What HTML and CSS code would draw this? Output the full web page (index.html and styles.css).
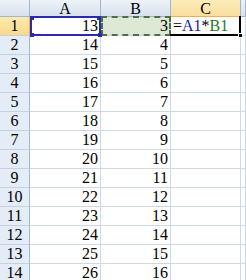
FILE: index.html
```html
<!DOCTYPE html>
<html lang="zh-CN">
<head>
    <meta charset="UTF-8">
    <title>sheet</title>
    <link rel="stylesheet" href="styles.css">
</head>
<body>
<div class="sheet">
    <div class="corner"></div>
    <div class="hd">A</div>
    <div class="hd">B</div>
    <div class="hd hd-on">C</div>
    <div class="hd"></div>

    <div class="rh rh-on">1</div>
    <div class="cell ref-a">13<i class="dot tl"></i><i class="dot tr"></i><i class="dot bl"></i><i class="dot br"></i></div>
    <div class="cell ref-b">3</div>
    <div class="cell edit"><span>=</span><span class="c-a">A1</span><span>*</span><span class="c-b">B1</span><i class="fill"></i></div>
    <div class="cell"></div>

    <div class="rh">2</div><div class="cell">14</div><div class="cell">4</div><div class="cell"></div><div class="cell"></div>
    <div class="rh">3</div><div class="cell">15</div><div class="cell">5</div><div class="cell"></div><div class="cell"></div>
    <div class="rh">4</div><div class="cell">16</div><div class="cell">6</div><div class="cell"></div><div class="cell"></div>
    <div class="rh">5</div><div class="cell">17</div><div class="cell">7</div><div class="cell"></div><div class="cell"></div>
    <div class="rh">6</div><div class="cell">18</div><div class="cell">8</div><div class="cell"></div><div class="cell"></div>
    <div class="rh">7</div><div class="cell">19</div><div class="cell">9</div><div class="cell"></div><div class="cell"></div>
    <div class="rh">8</div><div class="cell">20</div><div class="cell">10</div><div class="cell"></div><div class="cell"></div>
    <div class="rh">9</div><div class="cell">21</div><div class="cell">11</div><div class="cell"></div><div class="cell"></div>
    <div class="rh">10</div><div class="cell">22</div><div class="cell">12</div><div class="cell"></div><div class="cell"></div>
    <div class="rh">11</div><div class="cell">23</div><div class="cell">13</div><div class="cell"></div><div class="cell"></div>
    <div class="rh">12</div><div class="cell">24</div><div class="cell">14</div><div class="cell"></div><div class="cell"></div>
    <div class="rh">13</div><div class="cell">25</div><div class="cell">15</div><div class="cell"></div><div class="cell"></div>
    <div class="rh">14</div><div class="cell">26</div><div class="cell">16</div><div class="cell"></div><div class="cell"></div>
</div>
</body>
</html>
```

FILE: styles.css
```css
* {
    margin: 0;
    padding: 0;
    box-sizing: border-box;
}

body {
    background: #ffffff;
    font-family: "Liberation Serif", "Noto Sans CJK SC", serif;
    font-size: 16px;
    color: #000000;
    overflow: hidden;
}

.sheet {
    display: grid;
    grid-template-columns: 30px 71px 70px 70px 1fr;
    grid-template-rows: 17px repeat(14, 19px);
    width: 246px;
}

.corner, .hd {
    background: linear-gradient(to bottom, #eef3fa 0%, #e0e8f3 60%, #d8e1ed 100%);
    border-right: 1px solid #9eb6ce;
    border-bottom: 1px solid #9eb6ce;
}

.hd {
    display: flex;
    align-items: center;
    justify-content: center;
    line-height: 16px;
    padding-top: 1px;
}

/* 当前列 */
.hd-on {
    background: linear-gradient(to bottom, #fcecbb 0%, #f9de9c 100%);
    border-bottom-color: #f2b04c;
}

.rh {
    display: flex;
    align-items: flex-end;
    justify-content: center;
    padding-bottom: 1px;
    line-height: 17px;
    background: #e4ecf7;
    border-right: 1px solid #9eb6ce;
    border-bottom: 1px solid #c5d1e0;
}

/* 当前行 */
.rh-on {
    background: linear-gradient(to bottom, #fcebb0 0%, #f9d98a 100%);
    border-right-color: #f2b04c;
}

.cell {
    position: relative;
    display: flex;
    align-items: flex-end;
    justify-content: flex-end;
    padding: 0 2px 1px 0;
    line-height: 17px;
    border-right: 1px solid #d0d7e5;
    border-bottom: 1px solid #d0d7e5;
}

/* A1 引用框 */
.ref-a::after {
    content: "";
    position: absolute;
    top: -1px;
    left: 0;
    right: -1px;
    bottom: -1px;
    border: 2px solid #2a2ab0;
}

.dot {
    position: absolute;
    z-index: 2;
    width: 4px;
    height: 4px;
    background: #2a2ab0;
}

.dot.tl { top: -1px; left: 0; }
.dot.tr { top: -1px; right: -1px; }
.dot.bl { bottom: -2px; left: 0; }
.dot.br { bottom: -2px; right: -2px; }

/* B1 引用框 */
.ref-b {
    background: #dde9d5;
}

.ref-b::after {
    content: "";
    position: absolute;
    top: -1px;
    left: 0;
    right: -1px;
    bottom: -1px;
    border: 2px dashed #4f6e48;
}

/* C1 编辑中 */
.edit {
    justify-content: flex-start;
    padding-left: 2px;
}

.edit::after {
    content: "";
    position: absolute;
    top: -1px;
    left: -1px;
    right: -1px;
    bottom: -1px;
    border: 2px solid #000000;
    border-left: none;
    border-top: none;
}

.c-a {
    color: #1a1aa6;
}

.c-b {
    color: #1f7a1f;
}

.fill {
    position: absolute;
    z-index: 2;
    right: -3px;
    bottom: -3px;
    width: 5px;
    height: 5px;
    background: #000000;
    border: 1px solid #ffffff;
}
```
